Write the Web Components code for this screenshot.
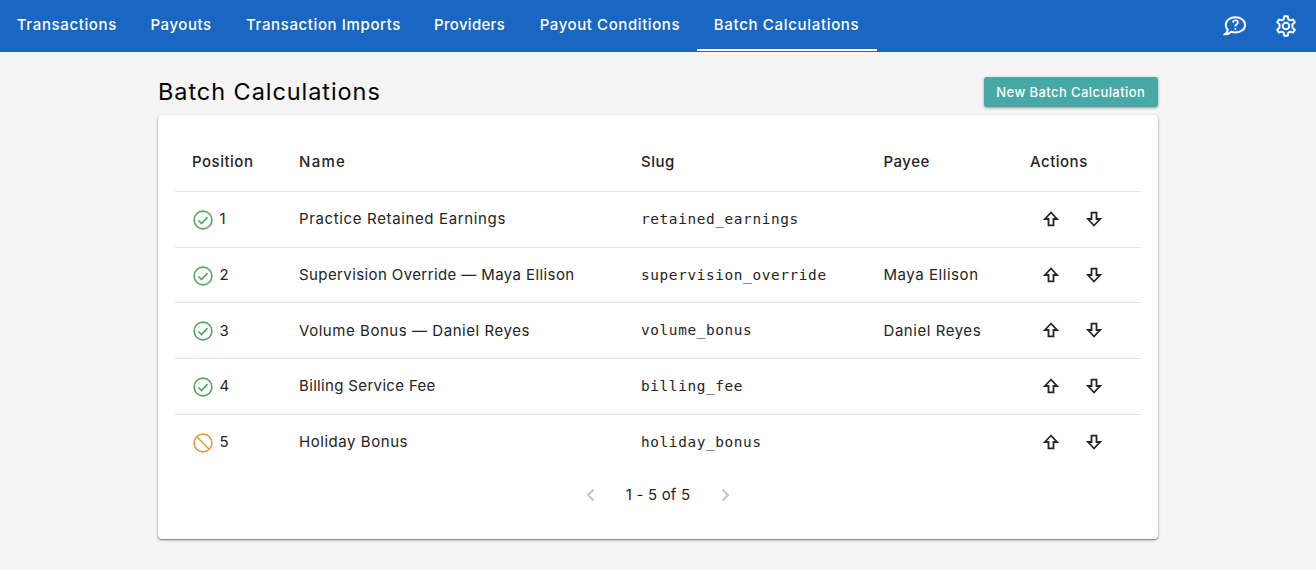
<!DOCTYPE html>
<html lang="en">
<head>
<meta charset="utf-8">
<title>Batch Calculations</title>
<style>
body {
    margin: 0;
    min-height: 570px;
    background: #f5f5f5;
    font-family: Inter, "Open Sans", sans-serif;
    color: #242424;
}
</style>
</head>
<body>
<app-bar>
    <nav-tab style="--w: 99px; --spacing: 0.63px">Transactions</nav-tab>
    <nav-tab style="--w: 61px; --spacing: 0.58px">Payouts</nav-tab>
    <nav-tab style="--w: 153.5px; --spacing: 0.62px">Transaction Imports</nav-tab>
    <nav-tab style="--w: 71px; --spacing: 0.3px">Providers</nav-tab>
    <nav-tab style="--w: 139.5px; --spacing: 0.58px">Payout Conditions</nav-tab>
    <nav-tab style="--w: 145px; --spacing: 0.68px" active>Batch Calculations</nav-tab>
    <ui-icon slot="tools" name="help" size="24"></ui-icon>
    <ui-icon slot="tools" name="gear" size="24"></ui-icon>
</app-bar>
<page-panel>
    <span slot="title">Batch Calculations</span>
    <action-button slot="action">New Batch Calculation</action-button>
    <batch-table></batch-table>
    <page-nav>1 - 5 of 5</page-nav>
</page-panel>

<script>
"use strict"

/* Model */
const calculations = [
    { position: 1, active: true, name: "Practice Retained Earnings", slug: "retained_earnings", payee: "", spacing: 0.64 },
    { position: 2, active: true, name: "Supervision Override — Maya Ellison", slug: "supervision_override", payee: "Maya Ellison", spacing: 0.4 },
    { position: 3, active: true, name: "Volume Bonus — Daniel Reyes", slug: "volume_bonus", payee: "Daniel Reyes", spacing: 0.55 },
    { position: 4, active: true, name: "Billing Service Fee", slug: "billing_fee", payee: "", spacing: 0.34 },
    { position: 5, active: false, name: "Holiday Bonus", slug: "holiday_bonus", payee: "", spacing: 0.55 }
];

const icons = {
    check: '<circle cx="12" cy="12" r="8.9"/><path d="M7.4 12.500l3.100 3 6-6.400"/>',
    blocked: '<circle cx="12" cy="12" r="8.9"/><path d="M5.8 5.8l12.4 12.4"/>',
    up: '<path d="M12 5.5L5.9 12h3.6v6.4h5V12h3.6z"/>',
    down: '<path d="M12 18.5L5.9 12h3.6V5.6h5V12h3.6z"/>',
    prev: '<path d="M14.5 6.5L9 12l5.5 5.5"/>',
    next: '<path d="M9.5 6.5L15 12l-5.5 5.5"/>',
    help: '<path d="M12.4 3.300c5.500 0 9.700 3.300 9.700 7.600s-4.200 7.600-9.700 7.600c-1.500 0-2.900-.3-4.100-.7-1.700 1.700-3.700 2.500-6.300 2.500 1.500-1.300 2.500-2.800 2.800-4.500-1.300-1.300-2.100-3-2.100-4.900 0-4.300 4.200-7.600 9.700-7.600z"/><path stroke-width="1.800" d="M9.900 8.500c.2-1.400 1.100-2.200 2.500-2.200 1.500 0 2.500.9 2.500 2.100 0 1.900-2.500 1.900-2.500 4M12.400 13.900v1.900"/>',
    gear: '<path stroke-linejoin="round" d="M10.300 2.300h3.400l.6 3 1.900 1.100 2.900-1 1.700 2.900-2.300 2v3.400l2.300 2-1.700 2.900-2.900-1-1.900 1.100-.6 3h-3.400l-.6-3-1.900-1.100-2.900 1-1.700-2.900 2.300-2v-3.400l-2.300-2 1.700-2.900 2.900 1 1.900-1.100z"/><circle cx="12" cy="12" r="3.300"/>'
};

/* Views */
class UiIcon extends HTMLElement {
    constructor() {
        super();
        this.attachShadow({ mode: 'open' });
    }
    connectedCallback() {
        const size = this.getAttribute("size") || 24;
        this.shadowRoot.innerHTML = `
<style>
:host { display: inline-flex; flex: none; }
svg { display: block; fill: none; stroke: currentColor; stroke-width: var(--stroke, 2); }
</style>
<svg width="${size}" height="${size}" viewBox="0 0 24 24">${icons[this.getAttribute("name")]}</svg>`;
    }
}
customElements.define('ui-icon', UiIcon);

const appBarView = document.createElement('template');
appBarView.innerHTML = `
<style>
:host {
    display: flex;
    justify-content: space-between;
    height: 52px;
    background: #1967c2;
    color: #fff;
}
nav { display: flex; }
.tools {
    display: flex;
    align-items: center;
    gap: 27px;
    padding-right: 18px;
}
</style>
<nav><slot></slot></nav>
<div class="tools"><slot name="tools"></slot></div>
`;

class AppBar extends HTMLElement {
    constructor() {
        super();
        this.attachShadow({ mode: 'open' });
        this.shadowRoot.appendChild(appBarView.content.cloneNode(true));
    }
}
customElements.define('app-bar', AppBar);

const navTabView = document.createElement('template');
navTabView.innerHTML = `
<style>
:host {
    display: block;
    box-sizing: border-box;
    height: 51px;
    width: calc(var(--w) + 34.600px);
    padding-left: 16.800px;
    font-size: 15px;
    font-weight: 500;
    line-height: 50px;
    letter-spacing: var(--spacing);
    white-space: nowrap;
}
:host([active]) { border-bottom: 2px solid #fff; }
</style>
<slot></slot>
`;

class NavTab extends HTMLElement {
    constructor() {
        super();
        this.attachShadow({ mode: 'open' });
        this.shadowRoot.appendChild(navTabView.content.cloneNode(true));
    }
}
customElements.define('nav-tab', NavTab);

const actionButtonView = document.createElement('template');
actionButtonView.innerHTML = `
<style>
:host {
    display: flex;
    align-items: center;
    justify-content: center;
    width: 174.500px;
    height: 30px;
    border-radius: 3px;
    background: #47a9a5;
    box-shadow: 0 1px 3px rgba(0, 0, 0, .4);
    color: #fff;
    font-size: 13px;
    font-weight: 500;
    letter-spacing: 0.420px;
    white-space: nowrap;
}
</style>
<slot></slot>
`;

class ActionButton extends HTMLElement {
    constructor() {
        super();
        this.attachShadow({ mode: 'open' });
        this.shadowRoot.appendChild(actionButtonView.content.cloneNode(true));
    }
}
customElements.define('action-button', ActionButton);

const pagePanelView = document.createElement('template');
pagePanelView.innerHTML = `
<style>
:host {
    display: block;
    width: 1000px;
    margin: 0 auto;
    padding-top: 25px;
}
header {
    display: flex;
    justify-content: space-between;
    height: 38px;
}
h1 {
    margin: 0;
    color: #000;
    font-size: 23.500px;
    font-weight: 400;
    line-height: 30px;
    letter-spacing: 0.930px;
}
section {
    box-sizing: border-box;
    height: 424px;
    padding: 17px 17px 0;
    background: #fff;
    border-radius: 4px;
    box-shadow: 0 1px 1px rgba(0, 0, 0, .25), 0 1px 3px rgba(0, 0, 0, .35);
}
</style>
<header><h1><slot name="title"></slot></h1><slot name="action"></slot></header>
<section><slot></slot></section>
`;

class PagePanel extends HTMLElement {
    constructor() {
        super();
        this.attachShadow({ mode: 'open' });
        this.shadowRoot.appendChild(pagePanelView.content.cloneNode(true));
    }
}
customElements.define('page-panel', PagePanel);

class BatchTable extends HTMLElement {
    constructor() {
        super();
        this.attachShadow({ mode: 'open' });
        this.shadowRoot.innerHTML = `
<style>
:host { display: block; font-size: 15px; }
.row {
    display: grid;
    grid-template-columns: 107px 342px 242.500px 146.500px 1fr;
    align-items: center;
    box-sizing: border-box;
    height: 55.700px;
    padding: 0 0 1px 17px;
    border-top: 1px solid #e4e4e4;
    white-space: nowrap;
}
.head {
    height: 59px;
    border: 0;
    font-weight: 500;
    letter-spacing: 0.500px;
}
.position, .actions { display: flex; align-items: center; }
.position { gap: 4px; margin-left: -0.600px; --stroke: 1.600; }
.position ui-icon { margin-top: 2px; color: #55a55a; }
.position ui-icon[name="blocked"] { color: #e69b3a; }
.slug { font: 14.400px "DejaVu Sans Mono", monospace; letter-spacing: 0.620px; }
.actions { gap: 19px; padding-left: 9px; --stroke: 1.800; }
</style>
<div class="row head"><span>Position</span><span style="letter-spacing: 1.300px">Name</span><span>Slug</span><span>Payee</span><span>Actions</span></div>
${calculations.map(row => `
<div class="row">
    <span class="position"><ui-icon name="${row.active ? "check" : "blocked"}" size="24"></ui-icon><span>${row.position}</span></span>
    <span style="letter-spacing: ${row.spacing}px">${row.name}</span>
    <span class="slug">${row.slug}</span>
    <span style="letter-spacing: 0.550px">${row.payee}</span>
    <span class="actions"><ui-icon name="up" size="24"></ui-icon><ui-icon name="down" size="24"></ui-icon></span>
</div>`).join("")}`;
    }
}
customElements.define('batch-table', BatchTable);

const pageNavView = document.createElement('template');
pageNavView.innerHTML = `
<style>
:host {
    display: flex;
    align-items: center;
    justify-content: center;
    gap: 22.500px;
    height: 51px;
    font-size: 15px;
    letter-spacing: 0.200px;
}
ui-icon { color: #c4c4c4; }
</style>
<ui-icon name="prev" size="24"></ui-icon>
<span><slot></slot></span>
<ui-icon name="next" size="24"></ui-icon>
`;

class PageNav extends HTMLElement {
    constructor() {
        super();
        this.attachShadow({ mode: 'open' });
        this.shadowRoot.appendChild(pageNavView.content.cloneNode(true));
    }
}
customElements.define('page-nav', PageNav);
</script>
</body>
</html>
